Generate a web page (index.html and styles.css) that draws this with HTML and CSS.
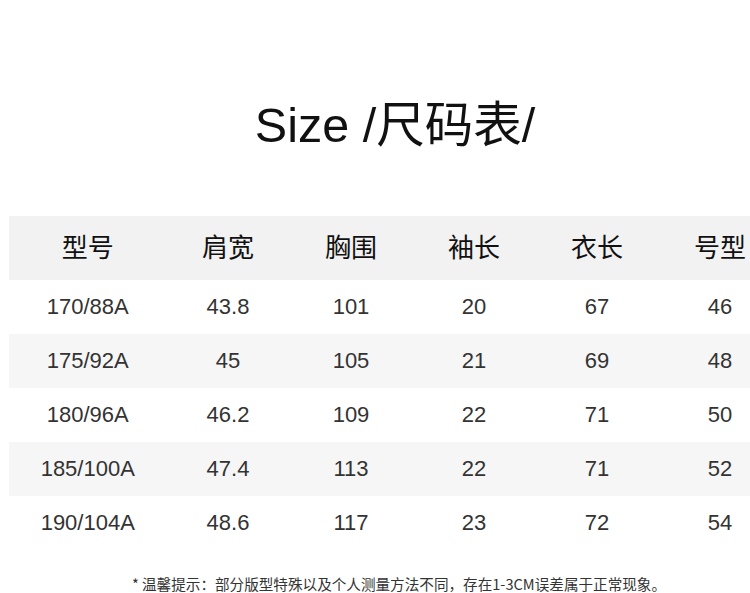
FILE: index.html
```html
<!DOCTYPE html>
<html lang="zh-CN">
<head>
<meta charset="utf-8">
<title>Size /尺码表/</title>
<link rel="stylesheet" href="styles.css">
</head>
<body>
<div class="page">
  <h1 class="title">Size /尺码表/</h1>
  <div class="table">
    <div class="row head">
      <div class="cell">型号</div>
      <div class="cell">肩宽</div>
      <div class="cell">胸围</div>
      <div class="cell">袖长</div>
      <div class="cell">衣长</div>
      <div class="cell">号型</div>
    </div>
    <div class="row">
      <div class="cell">170/88A</div><div class="cell">43.8</div><div class="cell">101</div><div class="cell">20</div><div class="cell">67</div><div class="cell">46</div>
    </div>
    <div class="row alt">
      <div class="cell">175/92A</div><div class="cell">45</div><div class="cell">105</div><div class="cell">21</div><div class="cell">69</div><div class="cell">48</div>
    </div>
    <div class="row">
      <div class="cell">180/96A</div><div class="cell">46.2</div><div class="cell">109</div><div class="cell">22</div><div class="cell">71</div><div class="cell">50</div>
    </div>
    <div class="row alt">
      <div class="cell">185/100A</div><div class="cell">47.4</div><div class="cell">113</div><div class="cell">22</div><div class="cell">71</div><div class="cell">52</div>
    </div>
    <div class="row">
      <div class="cell">190/104A</div><div class="cell">48.6</div><div class="cell">117</div><div class="cell">23</div><div class="cell">72</div><div class="cell">54</div>
    </div>
  </div>
  <p class="note">* 温馨提示：部分版型特殊以及个人测量方法不同，存在1-3CM误差属于正常现象。</p>
</div>
</body>
</html>
```

FILE: styles.css
```css
html, body {
  margin: 0;
  padding: 0;
  background: #ffffff;
  overflow: hidden;
}
.page {
  width: 772px;
  padding-left: 9px;
  font-family: "Liberation Sans", "Noto Sans CJK SC", sans-serif;
  color: #333;
}
.title {
  margin: 0;
  padding-top: 99px;
  height: 52px;
  font-size: 48.5px;
  line-height: 52px;
  font-weight: normal;
  color: #111;
  text-align: center;
}
.table {
  margin-top: 65px;
}
.row {
  display: grid;
  grid-template-columns: 157.5px repeat(5, 123px);
  height: 54px;
  align-items: center;
  font-size: 22px;
  color: #333;
}
.row.head {
  height: 64px;
  background: #f2f2f2;
  font-family: "Noto Sans CJK SC", sans-serif;
  font-size: 26px;
  line-height: 26px;
  color: #111;
}
.row.head .cell {
  padding-bottom: 5px;
}
.row.alt {
  background: #f6f6f6;
}
.cell {
  text-align: center;
  white-space: nowrap;
}
.note {
  margin: 0 0 0 40px;
  width: 700px;
  padding-top: 26px;
  font-family: "Noto Sans CJK SC", sans-serif;
  font-size: 14.6px;
  line-height: 16px;
  text-align: center;
  white-space: nowrap;
  color: #333;
}
```
